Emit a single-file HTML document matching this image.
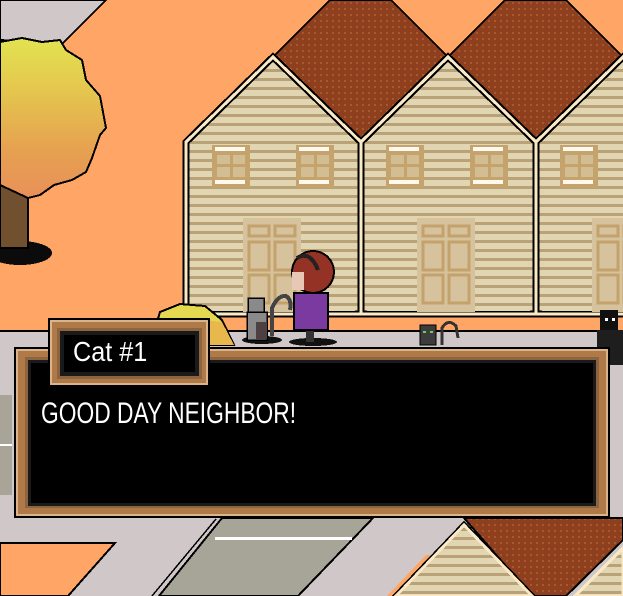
<!DOCTYPE html>
<html><head><meta charset="utf-8"><style>
html,body{margin:0;padding:0;width:623px;height:596px;overflow:hidden;background:#ffa566}
svg{position:absolute;left:0;top:0}
.t{position:absolute;color:#fff;font-family:"Liberation Sans",sans-serif;white-space:nowrap;transform-origin:0 0}
</style></head><body>
<svg width="623" height="596" viewBox="0 0 623 596" shape-rendering="crispEdges">
<defs>
<pattern id="wall" width="10" height="9" patternUnits="userSpaceOnUse">
<rect width="10" height="9" fill="#e2d5b2"/><rect y="6" width="10" height="3" fill="#b9a178"/>
</pattern>
<pattern id="roof" width="6" height="6" patternUnits="userSpaceOnUse">
<rect width="6" height="6" fill="#8e3f1e"/><rect x="2" y="2" width="2" height="2" fill="#a9572c"/>
</pattern>
</defs>
<polygon points="0,0 106,0 62,44 0,40" fill="#d0c8c8" stroke="#000" stroke-width="2"/>
<polygon points="273,57 330,0 391,0 448,57 361,144" fill="url(#roof)" stroke="#000" stroke-width="2"/>
<polygon points="448,57 505,0 566,0 623,57 623,144 536,144" fill="url(#roof)" stroke="#000" stroke-width="2"/>
<g stroke="#000" stroke-width="7" fill="url(#wall)">
<polygon points="186,142 273,57 361,142 361,314 186,314"/>
<polygon points="361,142 448,57 536,142 536,314 361,314"/>
<polygon points="536,142 623,57 711,142 711,314 536,314"/>
</g>
<g stroke="#f9e9c6" stroke-width="3" fill="none">
<polygon points="186,142 273,57 361,142 361,314 186,314"/>
<polygon points="361,142 448,57 536,142 536,314 361,314"/>
<polygon points="536,142 623,57 711,142 711,314 536,314"/>
</g>
<g fill="url(#wall)">
<polygon points="192,146 273,66 355,146 355,311 192,311"/>
<polygon points="367,146 448,66 530,146 530,311 367,311"/>
<polygon points="542,146 623,66 700,146 700,311 542,311"/>
</g>
<g id="win">
<rect x="212" y="145" width="38" height="43" fill="#c4a46c"/>
<rect x="217" y="155" width="28" height="22" fill="#d3bd92"/>
<rect x="230" y="155" width="3" height="22" fill="#c4a46c"/><rect x="217" y="164" width="28" height="3" fill="#c4a46c"/>
<rect x="215" y="147" width="30" height="4" fill="#fff8ee"/><rect x="215" y="180" width="30" height="4" fill="#fff8ee"/>
</g>
<use href="#win" x="84"/><use href="#win" x="174"/><use href="#win" x="258"/><use href="#win" x="348"/>
<g id="door">
<rect x="243" y="218" width="58" height="94" fill="#d6c29c"/>
<g fill="none" stroke="#c3a26c" stroke-width="3">
<rect x="249" y="226" width="20" height="10"/><rect x="275" y="226" width="20" height="10"/>
<rect x="249" y="242" width="20" height="28"/><rect x="275" y="242" width="20" height="28"/>
<rect x="249" y="275" width="20" height="28"/><rect x="275" y="275" width="20" height="28"/>
</g>
</g>
<use href="#door" x="174"/><use href="#door" x="349"/>
<rect x="0" y="318" width="623" height="12" fill="#ffa566"/>
<rect x="0" y="330" width="623" height="2" fill="#000"/>
<rect x="0" y="332" width="623" height="264" fill="#d0c8c8"/>
<rect x="0" y="395" width="12" height="100" fill="#a8a498"/>
<rect x="0" y="444" width="12" height="2" fill="#fff"/>
<polygon points="0,543 115,543 68,596 0,596" fill="#ffa566" stroke="#000" stroke-width="2"/>
<polygon points="222,518 373,518 298,596 159,596" fill="#a7a498" stroke="#000" stroke-width="2"/>
<line x1="216" y1="519" x2="152" y2="596" stroke="#000" stroke-width="1.5"/>
<rect x="215" y="537" width="137" height="3" fill="#fff"/>
<polygon points="426,555 440,555 401,596 387,596" fill="#ffa566"/>
<polygon points="464,518 623,518 623,540 566,596 532,596" fill="url(#roof)" stroke="#000" stroke-width="2"/>
<polygon points="464,525 532,596 396,596" fill="url(#wall)" stroke="#000" stroke-width="6"/>
<polygon points="464,525 532,596 396,596" fill="url(#wall)" stroke="#f9e9c6" stroke-width="3"/>
<polygon points="623,548 623,596 575,596" fill="url(#wall)" stroke="#f9e9c6" stroke-width="3"/>
<ellipse cx="20" cy="253" rx="32" ry="12" fill="#0b0b0b"/>
<rect x="0" y="180" width="28" height="68" fill="#70502f" stroke="#000" stroke-width="2"/>
<defs><linearGradient id="fol" x1="0" y1="0" x2="0" y2="1">
<stop offset="0" stop-color="#e2e350"/><stop offset="0.35" stop-color="#e4c44e"/><stop offset="0.7" stop-color="#e6a150"/><stop offset="1" stop-color="#e8905a"/></linearGradient></defs>
<polygon points="0,42 22,38 42,42 60,40 66,50 82,60 86,80 100,96 106,128 100,135 92,158 86,172 72,180 54,185 40,195 28,198 0,185" fill="url(#fol)" stroke="#000" stroke-width="2"/>
<polygon points="150,345 160,312 180,304 205,306 222,320 234,345" fill="#e4d850" stroke="#000" stroke-width="2"/>
<polygon points="205,320 222,322 234,345 210,345" fill="#e8b84c"/>
<ellipse cx="262" cy="340" rx="20" ry="4" fill="#111"/>
<rect x="248" y="298" width="16" height="14" fill="#8a8a8a" stroke="#000" stroke-width="1.5"/>
<rect x="247" y="312" width="20" height="28" fill="#8a8a8a" stroke="#000" stroke-width="1.5"/>
<rect x="256" y="322" width="10" height="18" fill="#4c4040"/>
<path d="M272 336 L272 308 Q278 295 286 296 Q292 300 290 310" fill="none" stroke="#444" stroke-width="4"/>
<ellipse cx="313" cy="342" rx="24" ry="4" fill="#111"/>
<rect x="306" y="328" width="8" height="14" fill="#333"/>
<rect x="294" y="293" width="34" height="37" fill="#7a3aa0" stroke="#000" stroke-width="2"/>
<circle cx="313" cy="272" r="21" fill="#953226" stroke="#000" stroke-width="2"/>
<rect x="292" y="272" width="12" height="18" fill="#e8c8b4"/>
<path d="M297 258 Q310 250 318 270" fill="none" stroke="#222" stroke-width="4"/>
<rect x="420" y="325" width="16" height="20" fill="#3c3c3c" stroke="#000" stroke-width="1"/>
<rect x="423" y="331" width="3" height="2" fill="#6cd060"/><rect x="430" y="331" width="3" height="2" fill="#6cd060"/>
<path d="M442 345 L442 328 Q448 318 456 326 L458 338" fill="none" stroke="#333" stroke-width="3"/>
<rect x="600" y="310" width="18" height="22" fill="#111"/>
<rect x="597" y="330" width="26" height="35" fill="#1e1e1e"/>
<rect x="605" y="318" width="3" height="3" fill="#fff"/><rect x="612" y="318" width="3" height="3" fill="#fff"/>
<rect x="14" y="347" width="596" height="171" fill="#000"/>
<rect x="16" y="349" width="592" height="167" fill="#dab48a"/>
<rect x="18" y="351" width="588" height="163" fill="#b07a48"/>
<rect x="25" y="357" width="574" height="151" fill="#8c6440"/>
<rect x="28" y="360" width="568" height="146" fill="#1a1a1a"/>
<rect x="31" y="363" width="562" height="140" fill="#000"/>
<rect x="48" y="318" width="162" height="69" fill="#000"/>
<rect x="50" y="320" width="158" height="65" fill="#dab48a"/>
<rect x="52" y="322" width="154" height="61" fill="#b07a48"/>
<rect x="57" y="328" width="145" height="51" fill="#8c6440"/>
<rect x="60" y="331" width="139" height="45" fill="#1a1a1a"/>
<rect x="64" y="335" width="131" height="37" fill="#000"/>
</svg>
<div class="t" style="left:73px;top:337px;font-size:28px;line-height:30px;transform:scaleX(0.9)">Cat #1</div>
<div class="t" style="left:41px;top:398px;font-size:30px;line-height:32px;transform:scaleX(0.76)">GOOD DAY NEIGHBOR!</div>
</body></html>
